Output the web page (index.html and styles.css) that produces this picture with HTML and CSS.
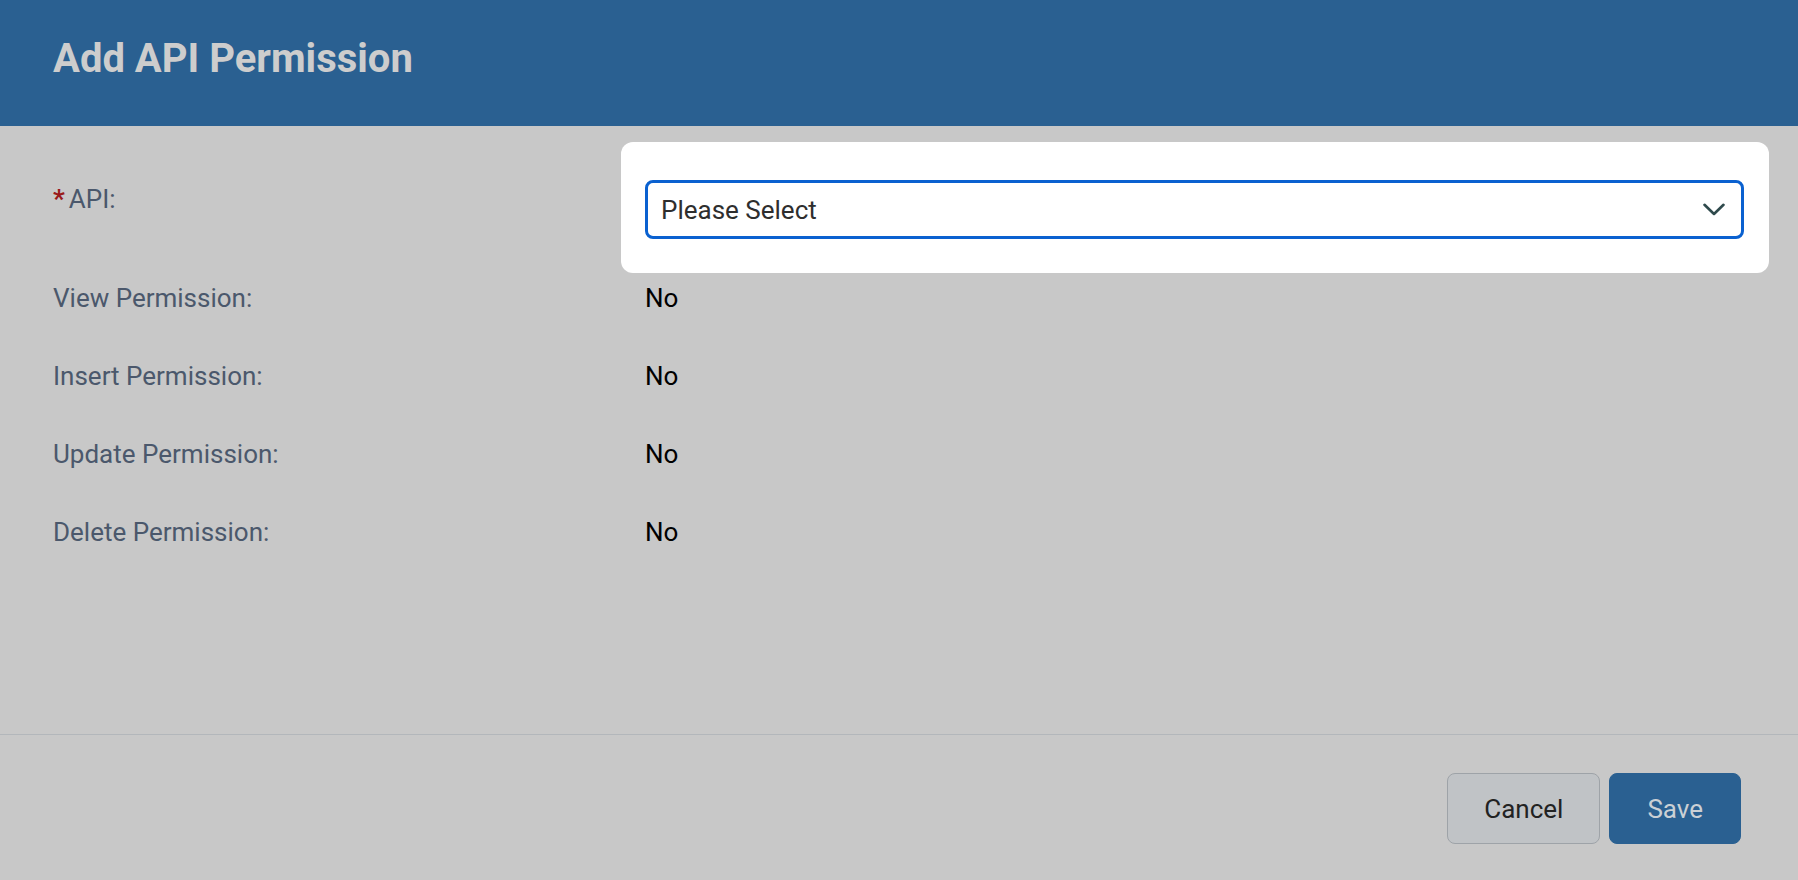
FILE: index.html
```html
<!DOCTYPE html>
<html lang="en">
<head>
<meta charset="utf-8">
<title>Add API Permission</title>
<link rel="stylesheet" href="styles.css">
</head>
<body>
<div class="modal">
  <header class="modal-header">
    <h1 class="modal-title">Add API Permission</h1>
  </header>
  <main class="modal-body">
    <div class="row row-api">
      <div class="label"><span class="req">*</span>API:</div>
      <div class="field">
        <div class="highlight">
          <div class="select">
            <span class="select-text">Please Select</span>
            <svg class="chevron" width="22" height="13" viewBox="0 0 22 13" aria-hidden="true">
              <polyline points="1.5,1.8 11,11 20.5,1.8" fill="none" stroke="#2f4a4c" stroke-width="2.6" stroke-linecap="round" stroke-linejoin="round"/>
            </svg>
          </div>
        </div>
      </div>
    </div>
    <div class="row">
      <div class="label">View Permission:</div>
      <div class="value">No</div>
    </div>
    <div class="row">
      <div class="label">Insert Permission:</div>
      <div class="value">No</div>
    </div>
    <div class="row">
      <div class="label">Update Permission:</div>
      <div class="value">No</div>
    </div>
    <div class="row">
      <div class="label">Delete Permission:</div>
      <div class="value">No</div>
    </div>
  </main>
  <footer class="modal-footer">
    <button class="btn btn-cancel" type="button">Cancel</button>
    <button class="btn btn-save" type="button">Save</button>
  </footer>
</div>
</body>
</html>
```

FILE: styles.css
```css
html, body {
  margin: 0;
  padding: 0;
  height: 100%;
}

body {
  font-family: Roboto, "Liberation Sans", Arial, sans-serif;
  background: #c8c8c8;
}

.modal {
  min-height: 100vh;
  display: flex;
  flex-direction: column;
  box-sizing: border-box;
}

.modal-header {
  height: 126px;
  box-sizing: border-box;
  background: #2a6091;
  padding: 35px 53px 0;
}

.modal-title {
  margin: 0;
  font-size: 40px;
  line-height: 48px;
  font-weight: 700;
  color: #cdcdcd;
}

.modal-body {
  flex: 1;
  padding: 0 54px 0 53px;
  display: flex;
  flex-direction: column;
  gap: 46px;
}

.row {
  display: grid;
  grid-template-columns: 592px 1fr;
  font-size: 26px;
  line-height: 32px;
}

.row-api {
  margin-top: 54px;
  margin-bottom: -3px;
}

.label {
  color: #4b586c;
}

.row-api .label {
  padding-top: 3px;
}

.req {
  color: #9a1a1a;
  font-weight: 700;
  margin-right: 4px;
}

.value {
  color: #000;
}

.highlight {
  background: #fff;
  border-radius: 12px;
  padding: 38px 25px 34px 24px;
  margin: -38px -25px -34px -24px;
}

.select {
  height: 59px;
  box-sizing: border-box;
  border: 3px solid #0a61d0;
  border-radius: 8px;
  background: #fff;
  display: flex;
  align-items: center;
  justify-content: space-between;
  padding: 0 16px 0 13px;
}

.select-text {
  font-size: 26px;
  color: #2e2e2e;
}

.chevron {
  display: block;
}

.modal-footer {
  border-top: 1px solid #b3b7bb;
  padding: 38px 57px 36px 0;
  display: flex;
  justify-content: flex-end;
  gap: 9px;
}

.btn {
  height: 71px;
  font-family: inherit;
  font-size: 26px;
  border-radius: 8px;
  cursor: pointer;
}

.btn-cancel {
  background: #c0c3c6;
  border: 1.5px solid #9ea3a8;
  color: #222;
  padding: 0 36px;
}

.btn-save {
  background: #2a6091;
  border: 1px solid #2a6091;
  color: #cbd0d5;
  padding: 0 37px;
}
```
